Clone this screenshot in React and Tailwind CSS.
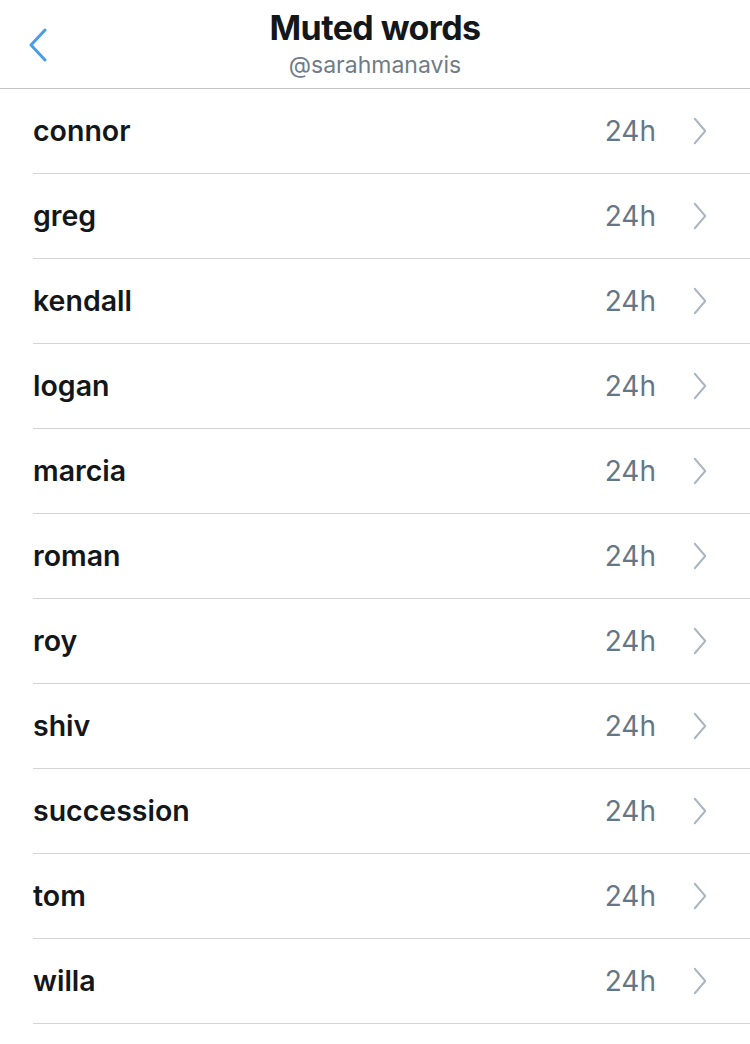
import React from "react";

const words = [
  "connor",
  "greg",
  "kendall",
  "logan",
  "marcia",
  "roman",
  "roy",
  "shiv",
  "succession",
  "tom",
  "willa",
];

function Chevron({ className, color, width = 2 }) {
  return (
    <svg className={className} viewBox="0 0 16 32" fill="none">
      <path
        d="M2 2 L14 16 L2 30"
        stroke={color}
        strokeWidth={width}
        strokeLinecap="round"
        strokeLinejoin="round"
      />
    </svg>
  );
}

export default function App() {
  return (
    <div
      className="w-[750px] h-[1044px] bg-white overflow-hidden"
      style={{ fontFamily: "Inter, 'Liberation Sans', sans-serif" }}
    >
      <div className="relative h-[89px] border-b border-[#c4c4c4] flex flex-col items-center">
        <button className="absolute left-[28px] top-[28px] w-[20px] h-[34px]">
          <svg viewBox="0 0 20 34" className="w-[20px] h-[34px]" fill="none">
            <path
              d="M17 2 L3 17 L17 32"
              stroke="#4a9cea"
              strokeWidth="3"
              strokeLinecap="round"
              strokeLinejoin="round"
            />
          </svg>
        </button>
        <div className="mt-[7px] text-[34px] leading-[42px] font-bold text-[#14171a] tracking-[-0.6px]">
          Muted words
        </div>
        <div className="mt-[1px] text-[23px] leading-[30px] text-[#707b88]">
          @sarahmanavis
        </div>
      </div>
      <div className="pl-[33px]">
        {words.map((w) => (
          <div
            key={w}
            className="h-[85px] border-b border-[#d4d4d4] flex items-center"
          >
            <div className="flex-1 text-[28.5px] font-semibold text-[#14171a]">
              {w}
            </div>
            <div className="text-[28px] text-[#657786] mr-[36px]">24h</div>
            <Chevron
              className="w-[16px] h-[28px] mr-[42px]"
              color="#a9b5c1"
              width={2.2}
            />
          </div>
        ))}
      </div>
    </div>
  );
}
